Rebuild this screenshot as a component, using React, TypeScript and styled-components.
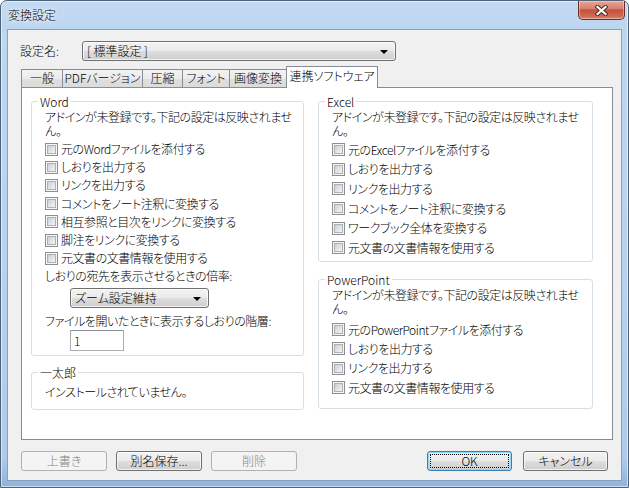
import styled, { createGlobalStyle } from "styled-components";

const GlobalStyle = createGlobalStyle`
  html, body {
    margin: 0;
    padding: 0;
    background: #ffffff;
  }
  body {
    font-family: "Noto Sans CJK JP", "Noto Sans", sans-serif;
    font-size: 11px;
    font-weight: 300;
    font-feature-settings: "palt";
    color: #000;
  }
  * {
    box-sizing: border-box;
  }
`;

const tabs = [
  { label: "一般", width: 42 },
  { label: "PDFバージョン", width: 81 },
  { label: "圧縮", width: 41 },
  { label: "フォント", width: 48 },
  { label: "画像変換", width: 58 },
  { label: "連携ソフトウェア", width: 92, active: true },
];

const wordItems = [
  "元のWordファイルを添付する",
  "しおりを出力する",
  "リンクを出力する",
  "コメントをノート注釈に変換する",
  "相互参照と目次をリンクに変換する",
  "脚注をリンクに変換する",
  "元文書の文書情報を使用する",
];

const excelItems = [
  "元のExcelファイルを添付する",
  "しおりを出力する",
  "リンクを出力する",
  "コメントをノート注釈に変換する",
  "ワークブック全体を変換する",
  "元文書の文書情報を使用する",
];

const pptItems = [
  "元のPowerPointファイルを添付する",
  "しおりを出力する",
  "リンクを出力する",
  "元文書の文書情報を使用する",
];

const CloseIcon = () => (
  <svg width="13" height="11" viewBox="0 0 13 11">
    <path d="M2.5 2 L10.5 9 M10.5 2 L2.5 9" stroke="#4a2a26" strokeWidth="4.2" strokeLinecap="square" />
    <path d="M2.5 2 L10.5 9 M10.5 2 L2.5 9" stroke="#ffffff" strokeWidth="2.2" strokeLinecap="square" />
  </svg>
);

const Check = ({ label, h }: { label: string; h: number }) => (
  <CheckRow $h={h}>
    <Box />
    <span>{label}</span>
  </CheckRow>
);

const Notice = ({ gap }: { gap: number }) => (
  <NoticeText $gap={gap}>
    <div>アドインが未登録です。下記の設定は反映されませ</div>
    <div>ん。</div>
  </NoticeText>
);

export default function App() {
  return (
    <>
      <GlobalStyle />
      <Window>
        <TitleBar>
          <Title>変換設定</Title>
          <CloseBtn>
            <CloseIcon />
          </CloseBtn>
        </TitleBar>

        <Client>
          <SettingRow>
            <SettingLabel>設定名:</SettingLabel>
            <Combo $w={314}>
              <span>[ 標準設定 ]</span>
              <Arrow />
            </Combo>
          </SettingRow>

          <TabStrip>
            {tabs.map((t) => (
              <Tab key={t.label} $w={t.width} $active={!!t.active}>
                {t.label}
              </Tab>
            ))}
          </TabStrip>

          <Panel>
            <Column>
              <Group $h={262}>
                <Legend>Word</Legend>
                <Notice gap={2} />
                {wordItems.map((s) => (
                  <Check key={s} label={s} h={18.2} />
                ))}
                <FieldLabel $top={2}>しおりの宛先を表示させるときの倍率:</FieldLabel>
                <Indent>
                  <Combo $w={139}>
                    <span>ズーム設定維持</span>
                    <Arrow />
                  </Combo>
                </Indent>
                <FieldLabel $top={6}>ファイルを開いたときに表示するしおりの階層:</FieldLabel>
                <Indent>
                  <NumberBox>1</NumberBox>
                </Indent>
              </Group>

              <Group $h={45} $gap={9}>
                <Legend>一太郎</Legend>
                <Plain>インストールされていません。</Plain>
              </Group>
            </Column>

            <Column>
              <Group $h={168}>
                <Legend>Excel</Legend>
                <Notice gap={2} />
                {excelItems.map((s) => (
                  <Check key={s} label={s} h={19.6} />
                ))}
              </Group>

              <Group $h={137} $gap={10}>
                <Legend>PowerPoint</Legend>
                <Notice gap={4} />
                {pptItems.map((s) => (
                  <Check key={s} label={s} h={19.3} />
                ))}
              </Group>
            </Column>
          </Panel>

          <ButtonBar>
            <ButtonGroup>
              <Button $disabled>上書き</Button>
              <Button>別名保存...</Button>
              <Button $disabled>削除</Button>
            </ButtonGroup>
            <ButtonGroup $gap={11}>
              <Button $w={85} $default>
                OK
              </Button>
              <Button $w={85}>キャンセル</Button>
            </ButtonGroup>
          </ButtonBar>
        </Client>
      </Window>
    </>
  );
}

const Window = styled.div`
  width: 629px;
  height: 488px;
  border: 1px solid #4f6277;
  border-radius: 7px 7px 0 0;
  padding: 0 6px 6px 6px;
  display: flex;
  flex-direction: column;
  background: linear-gradient(
    180deg,
    #c3daf3 0%,
    #bed7f1 5%,
    #b9d3ef 50%,
    #aecbec 94%,
    #8fb3de 100%
  );
  box-shadow: inset 0 0 0 1px rgba(255, 255, 255, 0.55);
`;

const TitleBar = styled.div`
  height: 28px;
  display: flex;
  justify-content: space-between;
  align-items: flex-start;
`;

const Title = styled.div`
  padding: 6px 0 0 1px;
  line-height: 16px;
  font-size: 12px;
  text-shadow: 0 0 6px #ffffff, 0 0 3px #ffffff;
`;

const CloseBtn = styled.div`
  width: 47px;
  height: 19px;
  margin-right: -3px;
  border: 1px solid #6e2e27;
  border-top: none;
  border-radius: 0 0 5px 5px;
  background: linear-gradient(
    180deg,
    #e8a596 0%,
    #d88070 42%,
    #c6503b 50%,
    #cf6a52 85%,
    #dd8a70 100%
  );
  box-shadow: inset 0 0 0 1px rgba(255, 255, 255, 0.35);
  display: flex;
  align-items: center;
  justify-content: center;
`;

const Client = styled.div`
  width: 615px;
  height: 452px;
  border: 1px solid #8aa0ba;
  background: #f0f0f0;
  display: flex;
  flex-direction: column;
`;

const SettingRow = styled.div`
  display: flex;
  align-items: center;
  margin: 11px 0 0 12px;
  height: 20px;
`;

const SettingLabel = styled.div`
  width: 62px;
  line-height: 16px;
  font-size: 12px;
`;

const Combo = styled.div<{ $w: number }>`
  width: ${(p) => p.$w}px;
  height: 20px;
  border: 1px solid #707070;
  border-radius: 3px;
  padding: 0 7px 0 4px;
  display: flex;
  align-items: center;
  justify-content: space-between;
  line-height: 16px;
  font-size: 12px;
  background: linear-gradient(
    180deg,
    #f2f2f2 0%,
    #ebebeb 48%,
    #dddddd 52%,
    #cfcfcf 100%
  );
  box-shadow: inset 0 0 0 1px rgba(255, 255, 255, 0.7);
`;

const Arrow = styled.span`
  width: 0;
  height: 0;
  border-left: 4px solid transparent;
  border-right: 4px solid transparent;
  border-top: 4px solid #000;
  margin-top: 1px;
`;

const TabStrip = styled.div`
  display: flex;
  align-items: flex-end;
  height: 21px;
  margin: 5px 0 0 13px;
`;

const Tab = styled.div<{ $w: number; $active: boolean }>`
  position: relative;
  z-index: ${(p) => (p.$active ? 2 : 1)};
  width: ${(p) => p.$w}px;
  height: ${(p) => (p.$active ? 22 : 18)}px;
  margin-left: -1px;
  margin-bottom: ${(p) => (p.$active ? -1 : 0)}px;
  border: 1px solid #898c95;
  border-bottom: none;
  text-align: center;
  white-space: nowrap;
  font-size: 12px;
  line-height: ${(p) => (p.$active ? 14 : 16)}px;
  padding-top: ${(p) => (p.$active ? 2 : 0)}px;
  background: ${(p) =>
    p.$active
      ? "#ffffff"
      : "linear-gradient(180deg, #f2f2f2 0%, #ebebeb 50%, #dfdfdf 51%, #dcdcdc 100%)"};
  &:first-child {
    margin-left: 0;
  }
`;

const Panel = styled.div`
  width: 592px;
  height: 353px;
  margin-left: 13px;
  border: 1px solid #898c95;
  background: #ffffff;
  padding: 6px 0 0 9px;
  display: grid;
  grid-template-columns: 273px 275px;
  column-gap: 14px;
  align-items: start;
`;

const Column = styled.div`
  display: flex;
  flex-direction: column;
`;

const Group = styled.fieldset<{ $h: number; $gap?: number }>`
  height: ${(p) => p.$h}px;
  margin: ${(p) => p.$gap ?? 0}px 0 0 0;
  padding: 0 6px 0 13px;
  border: 1px solid #d5dfe5;
  border-radius: 3px;
  min-width: 0;
`;

const Legend = styled.legend`
  margin-left: -7px;
  padding: 0 2px;
  line-height: 15px;
  font-size: 12px;
`;

const NoticeText = styled.div<{ $gap: number }>`
  margin: 1px 0 ${(p) => p.$gap}px 0;
  line-height: 14px;
  font-size: 12px;
  letter-spacing: -0.45px;
  white-space: nowrap;
`;

const CheckRow = styled.div<{ $h: number }>`
  height: ${(p) => p.$h}px;
  display: flex;
  align-items: center;
  gap: 3px;
  white-space: nowrap;
  line-height: 14px;
  font-size: 12px;
  letter-spacing: -0.45px;
`;

const Box = styled.span`
  flex: none;
  width: 13px;
  height: 13px;
  border: 1px solid #8e8f8f;
  background: #f6f6f6;
  padding: 1px;
  display: flex;
  &::after {
    content: "";
    flex: 1;
    border: 1px solid #aeb2b8;
    background: linear-gradient(135deg, #cbcfd5 0%, #e2e4e7 55%, #f4f4f4 100%);
  }
`;

const FieldLabel = styled.div<{ $top: number }>`
  margin-top: ${(p) => p.$top}px;
  line-height: 14px;
  font-size: 12px;
  letter-spacing: -0.45px;
  white-space: nowrap;
`;

const Indent = styled.div`
  margin: 5px 0 0 25px;
  display: flex;
`;

const NumberBox = styled.div`
  width: 54px;
  height: 21px;
  margin-top: -3px;
  border: 1px solid #abadb3;
  border-top-color: #8d9097;
  background: #ffffff;
  padding-left: 3px;
  line-height: 19px;
  font-size: 12px;
`;

const Plain = styled.div`
  margin-top: 5px;
  line-height: 14px;
  font-size: 12px;
  letter-spacing: -0.45px;
`;

const ButtonBar = styled.div`
  display: flex;
  justify-content: space-between;
  margin-top: 11px;
  padding: 0 13px 0 13px;
`;

const ButtonGroup = styled.div<{ $gap?: number }>`
  display: flex;
  gap: ${(p) => p.$gap ?? 9}px;
`;

const Button = styled.div<{ $w?: number; $disabled?: boolean; $default?: boolean }>`
  position: relative;
  width: ${(p) => p.$w ?? 86}px;
  height: 20px;
  border-radius: 3px;
  display: flex;
  align-items: center;
  justify-content: center;
  line-height: 16px;
  font-size: 12px;
  white-space: nowrap;
  color: ${(p) => (p.$disabled ? "#838383" : "#000")};
  border: 1px solid
    ${(p) => (p.$disabled ? "#adb2b5" : p.$default ? "#3c7fb1" : "#707070")};
  background: ${(p) =>
    p.$disabled
      ? "#f4f4f4"
      : "linear-gradient(180deg, #f2f2f2 0%, #ebebeb 48%, #dddddd 52%, #cfcfcf 100%)"};
  box-shadow: ${(p) =>
    p.$disabled
      ? "none"
      : p.$default
      ? "inset 0 0 0 1px #8fd5f7"
      : "inset 0 0 0 1px rgba(255, 255, 255, 0.7)"};
  &::after {
    content: "";
    display: ${(p) => (p.$default ? "block" : "none")};
    position: absolute;
    inset: 2px;
    border: 1px dotted #000;
  }
`;
